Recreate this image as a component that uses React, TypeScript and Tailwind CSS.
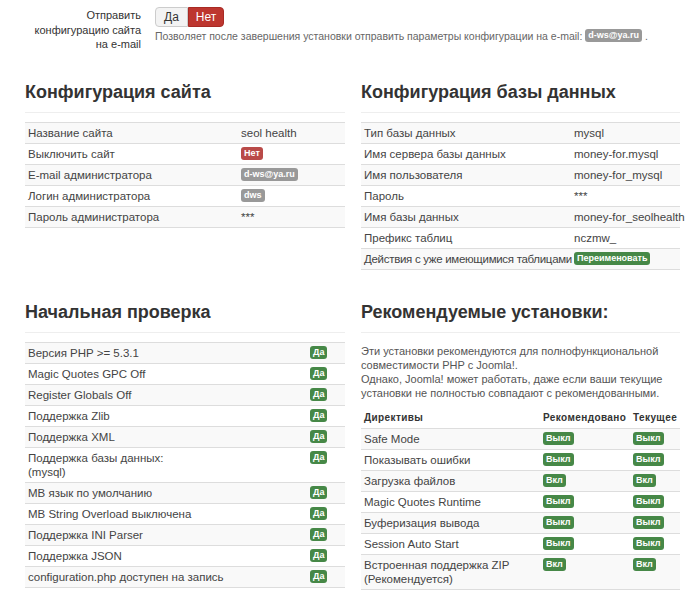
import type { ReactNode } from "react";

type Tone = "green" | "red" | "gray";

const toneClass: Record<Tone, string> = {
    green: "bg-[#468847]",
    red: "bg-[#b94a48]",
    gray: "bg-[#999999]",
};

function Badge({ tone, children }: { tone: Tone; children: ReactNode }) {
    return (
        <span
            className={`inline-block h-[13px] rounded-[3px] px-[3px] align-top text-[9px] font-bold leading-[13px] text-white ${toneClass[tone]}`}
        >
            {children}
        </span>
    );
}

const siteConfig: [ReactNode, ReactNode][] = [
    ["Название сайта", "seol health"],
    ["Выключить сайт", <Badge tone="red">Нет</Badge>],
    ["E-mail администратора", <Badge tone="gray">d-ws@ya.ru</Badge>],
    ["Логин администратора", <Badge tone="gray">dws</Badge>],
    ["Пароль администратора", "***"],
];

const dbConfig: [ReactNode, ReactNode][] = [
    ["Тип базы данных", "mysql"],
    ["Имя сервера базы данных", "money-for.mysql"],
    ["Имя пользователя", "money-for_mysql"],
    ["Пароль", "***"],
    ["Имя базы данных", "money-for_seolhealth"],
    ["Префикс таблиц", "nczmw_"],
    [
        <span className="tracking-[-0.3px]">
            Действия с уже имеющимися таблицами
        </span>,
        <Badge tone="green">Переименовать</Badge>,
    ],
];

const checks: ReactNode[] = [
    "Версия PHP >= 5.3.1",
    "Magic Quotes GPC Off",
    "Register Globals Off",
    "Поддержка Zlib",
    "Поддержка XML",
    <>
        Поддержка базы данных:
        <br />
        (mysql)
    </>,
    "MB язык по умолчанию",
    "MB String Overload выключена",
    "Поддержка INI Parser",
    "Поддержка JSON",
    "configuration.php доступен на запись",
];

const recommended: [ReactNode, string, string][] = [
    ["Safe Mode", "Выкл", "Выкл"],
    ["Показывать ошибки", "Выкл", "Выкл"],
    ["Загрузка файлов", "Вкл", "Вкл"],
    ["Magic Quotes Runtime", "Выкл", "Выкл"],
    ["Буферизация вывода", "Выкл", "Выкл"],
    ["Session Auto Start", "Выкл", "Выкл"],
    [
        <>
            Встроенная поддержка ZIP
            <br />
            (Рекомендуется)
        </>,
        "Вкл",
        "Вкл",
    ],
];

function Heading({ children }: { children: ReactNode }) {
    return (
        <>
            <h3 className="text-[18px] font-bold leading-[24px] text-[#333]">
                {children}
            </h3>
            <div className="mt-[8px] border-t border-[#eeeeee]" />
        </>
    );
}

function rowClass(i: number) {
    return `border-t border-[#dddddd] ${i % 2 === 0 ? "bg-[#f9f9f9]" : ""}`;
}

// label cells get a little inset, value cells sit flush on the column line
const labelCell = "px-[3px] py-[3px] align-top leading-[14px]";
const valueCell = "py-[3px] align-top leading-[14px] whitespace-nowrap";

function KeyValueTable({
    rows,
    labelWidth,
}: {
    rows: [ReactNode, ReactNode][];
    labelWidth: string;
}) {
    return (
        <table className="mt-[9px] w-full table-fixed border-b border-[#dddddd]">
            <colgroup>
                <col className={labelWidth} />
                <col />
            </colgroup>
            <tbody>
                {rows.map(([k, v], i) => (
                    <tr key={i} className={rowClass(i)}>
                        <td className={`${labelCell} whitespace-nowrap`}>{k}</td>
                        <td className={valueCell}>{v}</td>
                    </tr>
                ))}
            </tbody>
        </table>
    );
}

export default function App() {
    return (
        <main className="min-h-screen w-[700px] bg-white pl-[25px] pr-[20px] font-['Liberation_Sans',Arial,sans-serif] text-[11.5px] text-[#444]">
            {/* send config by e-mail */}
            <div className="flex pt-[7px]">
                <div className="w-[116px] pt-[1px] text-right text-[11px] leading-[14.5px] text-[#333]">
                    Отправить
                    <br />
                    конфигурацию сайта
                    <br />
                    на e-mail
                </div>
                <div className="ml-[14px]">
                    <div className="flex h-[20px] text-[12px] leading-[18px]">
                        <button className="rounded-l-[4px] border border-[#cccccc] bg-[#f3f3f3] px-[8px] text-[#333]">
                            Да
                        </button>
                        <button className="rounded-r-[4px] border border-[#a82a24] bg-[#bd362f] px-[7px] text-white">
                            Нет
                        </button>
                    </div>
                    <p className="mt-[2px] text-[10.5px] leading-[14px] text-[#666]">
                        Позволяет после завершения установки отправить
                        параметры конфигурации на e-mail:{" "}
                        <Badge tone="gray">d-ws@ya.ru</Badge> .
                    </p>
                </div>
            </div>

            {/* configuration */}
            <div className="mt-[28px] flex gap-[16px]">
                <section className="w-[320px]">
                    <Heading>Конфигурация сайта</Heading>
                    <KeyValueTable rows={siteConfig} labelWidth="w-[216px]" />
                </section>
                <section className="w-[319px]">
                    <Heading>Конфигурация базы данных</Heading>
                    <KeyValueTable rows={dbConfig} labelWidth="w-[213px]" />
                </section>
            </div>

            {/* checks */}
            <div className="mt-[30px] flex gap-[16px]">
                <section className="w-[320px]">
                    <Heading>Начальная проверка</Heading>
                    <table className="mt-[9px] w-full table-fixed border-b border-[#dddddd]">
                        <colgroup>
                            <col className="w-[285px]" />
                            <col />
                        </colgroup>
                        <tbody>
                            {checks.map((c, i) => (
                                <tr key={i} className={rowClass(i)}>
                                    <td className={labelCell}>{c}</td>
                                    <td className={valueCell}>
                                        <Badge tone="green">Да</Badge>
                                    </td>
                                </tr>
                            ))}
                        </tbody>
                    </table>
                </section>
                <section className="w-[319px]">
                    <Heading>Рекомендуемые установки:</Heading>
                    <p className="mt-[11px] text-[11px] leading-[14px] text-[#555]">
                        Эти установки рекомендуются для полнофункциональной
                        совместимости PHP с Joomla!.
                        <br />
                        Однако, Joomla! может работать, даже если ваши текущие
                        установки не полностью совпадают с рекомендованными.
                    </p>
                    <table className="mt-[7px] w-full table-fixed border-b border-[#dddddd]">
                        <colgroup>
                            <col className="w-[182px]" />
                            <col className="w-[90px]" />
                            <col />
                        </colgroup>
                        <thead>
                            <tr className="h-[22px] text-left text-[10px] font-bold tracking-[0.4px] text-[#333]">
                                <th className="px-[3px] align-middle">Директивы</th>
                                <th className="align-middle whitespace-nowrap">
                                    Рекомендовано
                                </th>
                                <th className="align-middle whitespace-nowrap">
                                    Текущее
                                </th>
                            </tr>
                        </thead>
                        <tbody>
                            {recommended.map(([name, rec, cur], i) => (
                                <tr key={i} className={rowClass(i)}>
                                    <td className={labelCell}>{name}</td>
                                    <td className={valueCell}>
                                        <Badge tone="green">{rec}</Badge>
                                    </td>
                                    <td className={valueCell}>
                                        <Badge tone="green">{cur}</Badge>
                                    </td>
                                </tr>
                            ))}
                        </tbody>
                    </table>
                </section>
            </div>
        </main>
    );
}
